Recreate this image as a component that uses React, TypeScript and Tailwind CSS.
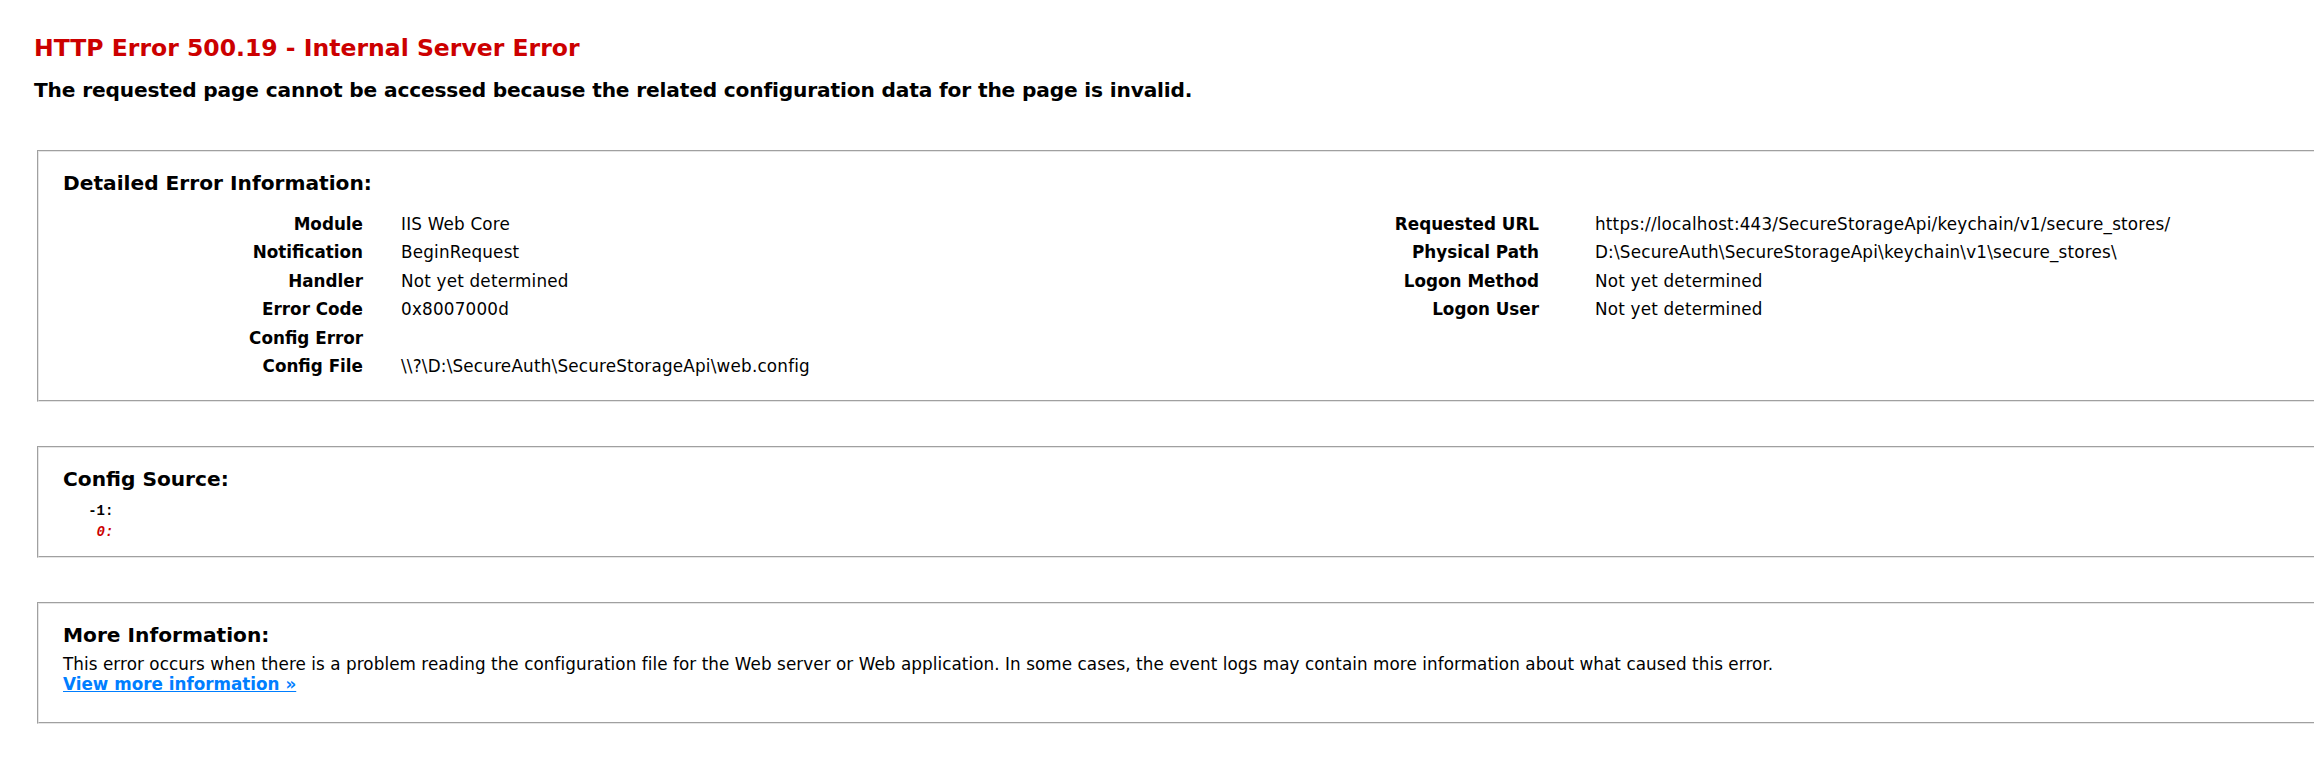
import React from "react";

const rowsLeft: [string, string][] = [
  ["Module", "IIS Web Core"],
  ["Notification", "BeginRequest"],
  ["Handler", "Not yet determined"],
  ["Error Code", "0x8007000d"],
  ["Config Error", ""],
  ["Config File", "\\\\?\\D:\\SecureAuth\\SecureStorageApi\\web.config"],
];

const rowsRight: [string, string][] = [
  ["Requested URL", "https://localhost:443/SecureStorageApi/keychain/v1/secure_stores/"],
  ["Physical Path", "D:\\SecureAuth\\SecureStorageApi\\keychain\\v1\\secure_stores\\"],
  ["Logon Method", "Not yet determined"],
  ["Logon User", "Not yet determined"],
];

function Box({ className, children }: { className: string; children: React.ReactNode }) {
  return (
    <div className="ml-[37px] border-t border-l border-b border-t-[#a0a0a0] border-l-[#a0a0a0] border-b-[#e6e6e6]">
      <div className={"border-t border-l border-b border-t-[#e6e6e6] border-l-[#e6e6e6] border-b-[#a0a0a0] pl-[24px] " + className}>
        {children}
      </div>
    </div>
  );
}

function Rows({ rows, labelW, gap }: { rows: [string, string][]; labelW: string; gap: string }) {
  return (
    <div className="flex flex-col">
      {rows.map(([k, v]) => (
        <div key={k} className={"flex h-[28.6px] items-center " + gap}>
          <div className={"text-right font-bold " + labelW}>{k}</div>
          <div className="whitespace-nowrap tracking-[0.2px]">{v}</div>
        </div>
      ))}
    </div>
  );
}

export default function App() {
  return (
    <div className="min-h-[773px] w-full overflow-hidden bg-white font-['DejaVu_Sans',Verdana,sans-serif] text-[16.8px] leading-[20.6px] text-black">
      <div className="pl-[34px] pt-[34px]">
        <div className="text-[23.52px] font-bold leading-[28px] text-[#CC0000]">
          HTTP Error 500.19 - Internal Server Error
        </div>
        <div className="mt-[16px] text-[20.16px] font-bold leading-[24px] tracking-[-0.16px]">
          The requested page cannot be accessed because the related configuration data for the page is invalid.
        </div>
      </div>

      <div className="mt-[48px]">
        <Box className="pt-[19px] pb-[18.5px]">
          <div className="text-[20.16px] font-bold leading-[24px]">Detailed Error Information:</div>
          <div className="mt-[14.5px] flex">
            <div className="w-[1100px] shrink-0">
              <Rows rows={rowsLeft} labelW="w-[300px]" gap="gap-[38px]" />
            </div>
            <div>
              <Rows rows={rowsRight} labelW="w-[376px]" gap="gap-[56px]" />
            </div>
          </div>
        </Box>
      </div>

      <div className="mt-[44px]">
        <Box className="pt-[19px] pb-[12.5px]">
          <div className="text-[20.16px] font-bold leading-[24px]">Config Source:</div>
          <div className="mt-[10.5px] whitespace-pre font-['Liberation_Mono',monospace] text-[14px] font-bold leading-[21px]">
            <div>{"   -1: "}</div>
            <div>
              {"    "}
              <span className="italic text-[#CC0000]">0:</span>
            </div>
          </div>
        </Box>
      </div>

      <div className="mt-[44px]">
        <Box className="pt-[19px] pb-[28px]">
          <div className="text-[20.16px] font-bold leading-[24px]">More Information:</div>
          <div className="mt-[7px] leading-[20px] tracking-[0.07px]">
            This error occurs when there is a problem reading the configuration file for the Web server or Web application. In some cases, the event logs may contain more information about what caused this error.
          </div>
          <div className="leading-[20px]">
            <a href="#" className="font-bold text-[#007EFF] underline">
              View more information »
            </a>
          </div>
        </Box>
      </div>
    </div>
  );
}
